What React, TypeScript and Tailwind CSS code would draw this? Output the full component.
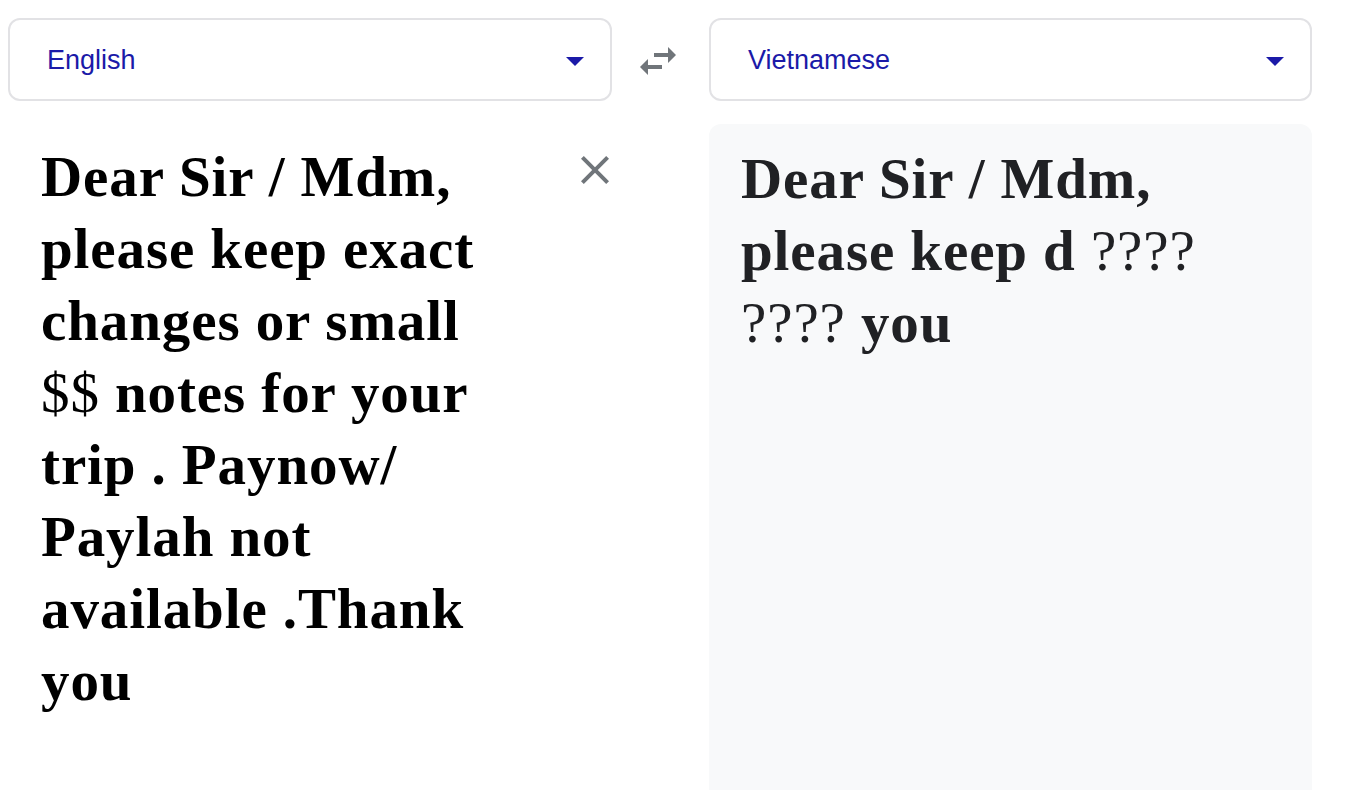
import React from 'react';

const serif = 'font-["Liberation_Serif","Times_New_Roman",serif]';

const LangSelect = ({ label }: { label: string }) => (
  <div className="flex h-[83px] items-center justify-between rounded-xl border-2 border-[#e2e2e5] bg-white pr-[26px] pl-[37px]">
    <span className='mt-0.5 font-["Liberation_Sans",Arial,sans-serif] text-[27px] text-[#1b1aa8]'>
      {label}
    </span>
    <svg width="18" height="10" viewBox="0 0 18 10" className="mt-1">
      <path d="M0 0h18L9 9z" fill="#1b1aa8" />
    </svg>
  </div>
);

const Fb = ({ children }: { children: React.ReactNode }) => (
  <span className="font-normal">{children}</span>
);

const sourceLines: React.ReactNode[] = [
  'Dear Sir / Mdm,',
  'please keep exact',
  'changes or small',
  <>
    <Fb>$$</Fb> notes for your
  </>,
  'trip . Paynow/',
  'Paylah not',
  'available .Thank',
  'you',
];

const targetLines: React.ReactNode[] = [
  'Dear Sir / Mdm,',
  <>
    please keep d <Fb>????</Fb>
  </>,
  <>
    <Fb>????</Fb> you
  </>,
];

export default function App() {
  return (
    <div className="flex h-[790px] overflow-hidden bg-white pt-[18px] pl-2">
      <div className="flex w-[604px] flex-col">
        <LangSelect label="English" />
        <div className="relative mt-[23px] pt-[17px] pl-[33px]">
          <div
            className={`${serif} text-[57px] leading-[72px] font-bold tracking-[0.9px] whitespace-pre text-black`}
          >
            {sourceLines.map((line, i) => (
              <div key={i}>{line}</div>
            ))}
          </div>
          <button className="absolute top-[22px] right-[-7px]">
            <svg width="48" height="48" viewBox="0 0 24 24" fill="#70757a">
              <path d="M19 6.41L17.59 5 12 10.59 6.41 5 5 6.41 10.59 12 5 17.59 6.41 19 12 13.41 17.59 19 19 17.59 13.41 12z" />
            </svg>
          </button>
        </div>
      </div>

      <div className="w-[97px] pt-[19px] pl-[22px]">
        <svg width="48" height="48" viewBox="0 0 24 24" fill="#70757a">
          <path d="M6.99 11L3 15l3.99 4v-3H14v-2H6.99v-3zM21 9l-3.99-4v3H10v2h7.01v3L21 9z" />
        </svg>
      </div>

      <div className="flex w-[603px] flex-col">
        <LangSelect label="Vietnamese" />
        <div className="mt-[23px] flex-1 rounded-t-xl bg-[#f8f9fa] pt-[19px] pl-8">
          <div
            className={`${serif} text-[57px] leading-[72px] font-bold tracking-[0.9px] whitespace-pre text-[#202124]`}
          >
            {targetLines.map((line, i) => (
              <div key={i}>{line}</div>
            ))}
          </div>
        </div>
      </div>
    </div>
  );
}
